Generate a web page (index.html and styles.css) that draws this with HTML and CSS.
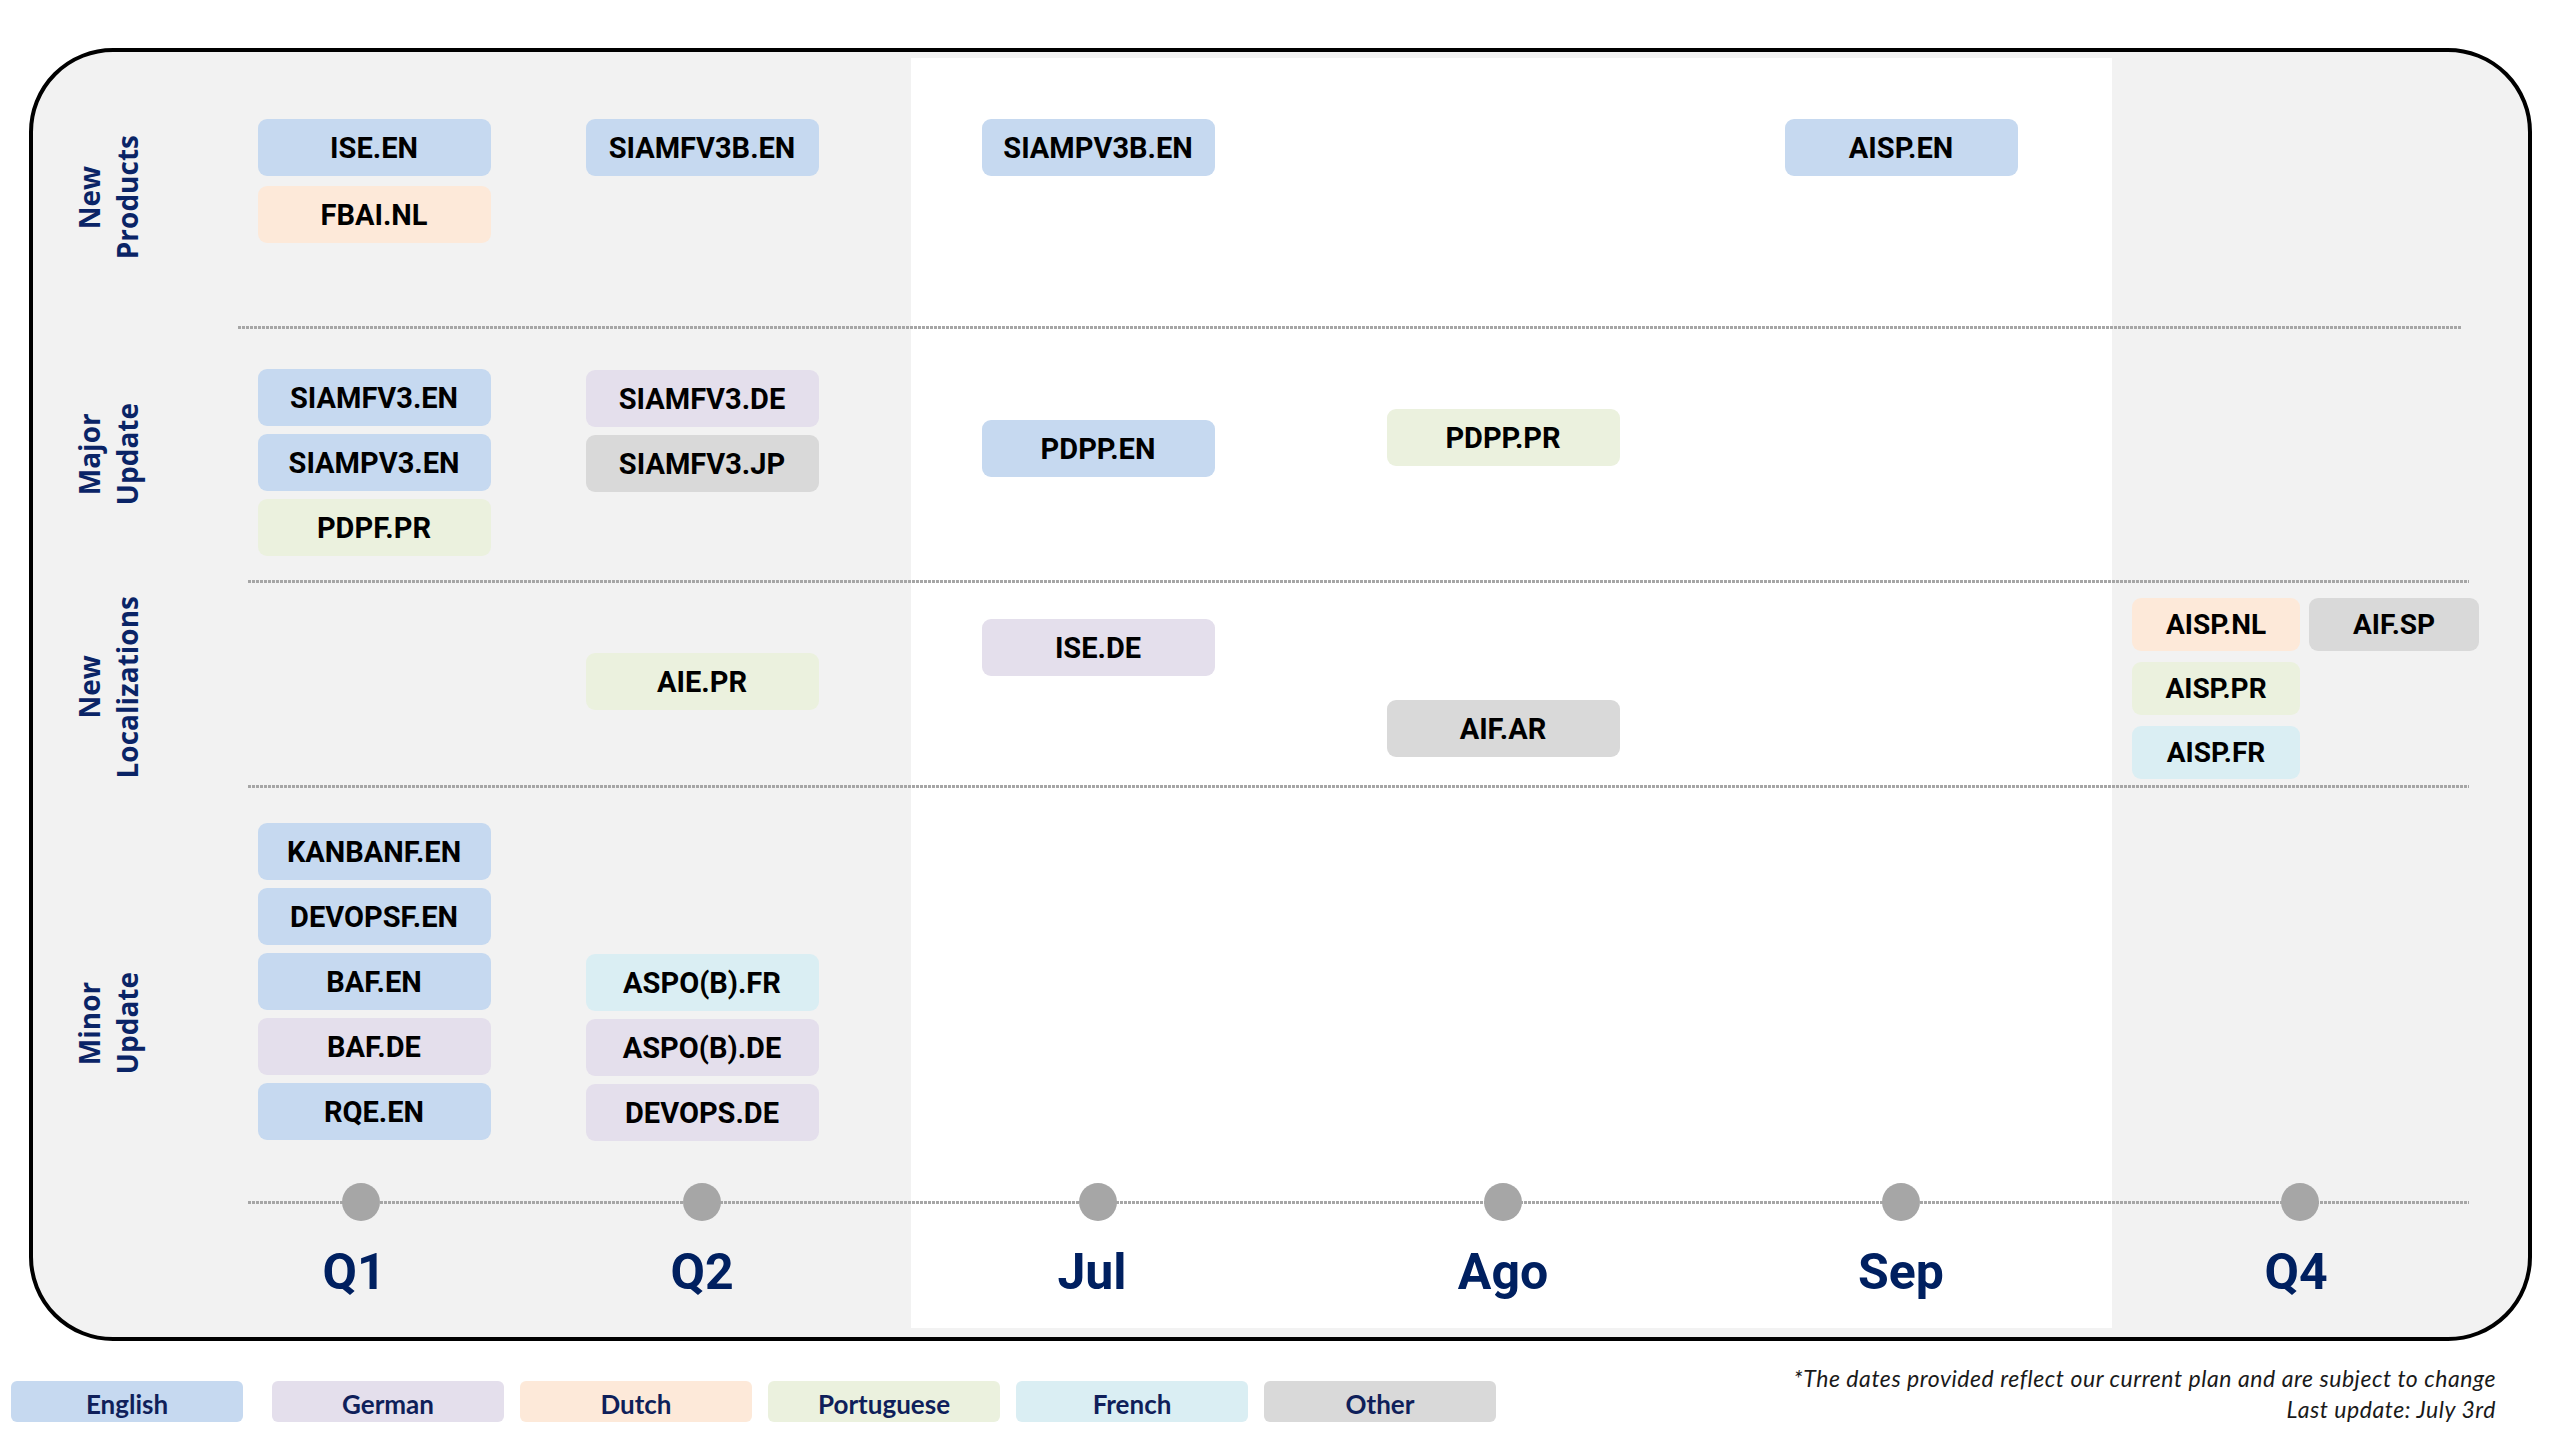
FILE: index.html
```html
<!DOCTYPE html>
<html lang="en">
<head>
<meta charset="utf-8">
<title>Roadmap</title>
<link rel="stylesheet" href="styles.css">
</head>
<body>
<div class="page">
  <div class="board">
    <div class="panel"></div>

    <div class="rule rule-1"></div>
    <div class="rule rule-2"></div>
    <div class="rule rule-3"></div>
    <div class="rule rule-time"></div>

    <div class="rowlabel r-np lbl-np"><span>New<br>Products</span></div>
    <div class="rowlabel r-mu"><span>Major<br>Update</span></div>
    <div class="rowlabel r-nl lbl-nl"><span>New<br>Localizations</span></div>
    <div class="rowlabel r-mi lbl-mi"><span>Minor<br>Update</span></div>

    <!-- New Products -->
    <div class="cell c-q1 r-np top-np wide-gap">
      <div class="tag en">ISE.EN</div>
      <div class="tag nl">FBAI.NL</div>
    </div>
    <div class="cell c-q2 r-np top-np">
      <div class="tag en">SIAMFV3B.EN</div>
    </div>
    <div class="cell c-jul r-np top-np">
      <div class="tag en">SIAMPV3B.EN</div>
    </div>
    <div class="cell c-sep r-np top-np">
      <div class="tag en">AISP.EN</div>
    </div>

    <!-- Major Update -->
    <div class="cell c-q1 r-mu mu-q1">
      <div class="tag en">SIAMFV3.EN</div>
      <div class="tag en">SIAMPV3.EN</div>
      <div class="tag pt">PDPF.PR</div>
    </div>
    <div class="cell c-q2 r-mu mu-q2">
      <div class="tag de">SIAMFV3.DE</div>
      <div class="tag ot">SIAMFV3.JP</div>
    </div>
    <div class="cell c-jul r-mu mu-jul">
      <div class="tag en">PDPP.EN</div>
    </div>
    <div class="cell c-ago r-mu mu-ago">
      <div class="tag pt">PDPP.PR</div>
    </div>

    <!-- New Localizations -->
    <div class="cell c-q2 r-nl nl-q2">
      <div class="tag pt">AIE.PR</div>
    </div>
    <div class="cell c-jul r-nl nl-jul">
      <div class="tag de">ISE.DE</div>
    </div>
    <div class="cell c-ago r-nl nl-ago">
      <div class="tag ot">AIF.AR</div>
    </div>
    <div class="q4grid c-q4 r-nl">
      <div class="tag small nl">AISP.NL</div>
      <div class="tag small ot">AIF.SP</div>
      <div class="tag small pt">AISP.PR</div>
      <div class="tag small fr q4-first">AISP.FR</div>
    </div>

    <!-- Minor Update -->
    <div class="cell c-q1 r-mi mi-q1">
      <div class="tag en">KANBANF.EN</div>
      <div class="tag en">DEVOPSF.EN</div>
      <div class="tag en">BAF.EN</div>
      <div class="tag de">BAF.DE</div>
      <div class="tag en">RQE.EN</div>
    </div>
    <div class="cell c-q2 r-mi mi-q2">
      <div class="tag fr">ASPO(B).FR</div>
      <div class="tag de">ASPO(B).DE</div>
      <div class="tag de">DEVOPS.DE</div>
    </div>

    <!-- Timeline -->
    <div class="node c-q1 node-q1"></div>
    <div class="node c-q2"></div>
    <div class="node c-jul"></div>
    <div class="node c-ago"></div>
    <div class="node c-sep"></div>
    <div class="node c-q4 node-q4"></div>

    <div class="period c-q1 period-q1">Q1</div>
    <div class="period c-q2">Q2</div>
    <div class="period c-jul period-jul">Jul</div>
    <div class="period c-ago">Ago</div>
    <div class="period c-sep">Sep</div>
    <div class="period c-q4 period-q4">Q4</div>
  </div>

  <div class="footer">
    <div class="legend">
      <div class="key en key-first">English</div>
      <div class="key de">German</div>
      <div class="key nl">Dutch</div>
      <div class="key pt">Portuguese</div>
      <div class="key fr">French</div>
      <div class="key ot">Other</div>
    </div>
    <div class="note">
      <p>*The dates provided reflect our current plan and are subject to change</p>
      <p>Last update: July 3rd</p>
    </div>
  </div>
</div>
</body>
</html>
```

FILE: styles.css
```css
* { box-sizing: border-box; }

html, body {
  margin: 0;
  padding: 0;
  background: #ffffff;
}

.page {
  width: 2560px;
  height: 1440px;
  padding-top: 48px;
  padding-left: 29px;
}

.board {
  width: 2503px;
  height: 1293px;
  border: 4px solid #000;
  border-radius: 84px;
  background: #f2f2f2;
  display: grid;
  grid-template-columns: 207px 268px 388px 15px 374px 436px 360px 31px 416px;
  grid-template-rows: 274px 3px 251px 3px 202px 3px 395px 38px 116px;
}

.panel {
  grid-column: 5 / 9;
  grid-row: 1 / -1;
  margin: 6px 0 9px;
  background: #ffffff;
}

/* dotted rules */
.rule {
  grid-column: 2 / -1;
  height: 3px;
  align-self: center;
  margin: 0 59px 0 8px;
  background: repeating-linear-gradient(90deg, #a6a6a6 0 3px, transparent 3px 4px);
}
.rule-1 { grid-row: 2; margin-left: -2px; margin-right: 67px; }
.rule-2 { grid-row: 4; }
.rule-3 { grid-row: 6; }
.rule-time { grid-row: 8; }

/* row labels */
.rowlabel {
  grid-column: 1;
  display: flex;
  align-items: center;
  justify-content: center;
  padding-right: 57px;
}
.rowlabel span {
  writing-mode: vertical-rl;
  transform: rotate(180deg);
  text-align: center;
  font-family: "Open Sans", "Noto Sans", sans-serif;
  font-weight: 700;
  font-size: 28px;
  line-height: 38px;
  color: #0a2466;
}
.lbl-np { padding-top: 16px; }
.lbl-nl { padding-top: 7px; }
.lbl-mi { padding-top: 75px; }

/* grid placement */
.r-np { grid-row: 1; }
.r-mu { grid-row: 3; }
.r-nl { grid-row: 5; }
.r-mi { grid-row: 7; }

.c-q1 { grid-column: 2; }
.c-q2 { grid-column: 3; }
.c-jul { grid-column: 5; }
.c-ago { grid-column: 6; }
.c-sep { grid-column: 7; }
.c-q4 { grid-column: 9; }

/* cells */
.cell {
  display: flex;
  flex-direction: column;
  align-items: center;
  gap: 8px;
}
.wide-gap { gap: 10px; }

.top-np { padding-top: 67px; }
.mu-q1 { padding-top: 40px; }
.mu-q2 { padding-top: 41px; }
.mu-jul { padding-top: 91px; }
.mu-ago { padding-top: 80px; }
.nl-q2 { padding-top: 70px; }
.nl-jul { padding-top: 36px; }
.nl-ago { padding-top: 117px; }
.mi-q1 { padding-top: 35px; }
.mi-q2 { padding-top: 166px; }

.q4grid {
  display: grid;
  grid-template-columns: 168px 170px;
  grid-auto-rows: 53px;
  column-gap: 9px;
  row-gap: 11px;
  align-content: start;
  padding-top: 15px;
  padding-left: 20px;
}
.q4-first { grid-column: 1; }

/* tags */
.tag {
  width: 233px;
  height: 57px;
  border-radius: 9px;
  display: flex;
  align-items: center;
  justify-content: center;
  font-family: Roboto, "Liberation Sans", sans-serif;
  font-weight: 700;
  font-size: 29px;
  color: #000000;
  white-space: nowrap;
}
.tag.small {
  width: auto;
  height: 53px;
  font-size: 28px;
}

.en { background: #c6d9f0; }
.de { background: #e4dfec; }
.nl { background: #fde9d9; }
.pt { background: #ebf1de; }
.fr { background: #daeef3; }
.ot { background: #d9d9d9; }

/* timeline */
.node {
  grid-row: 8;
  justify-self: center;
  width: 38px;
  height: 38px;
  border-radius: 50%;
  background: #a6a6a6;
}
.node-q1 { margin-right: 26px; }
.node-q4 { margin-right: 40px; }

.period {
  grid-row: 9;
  justify-self: center;
  padding-top: 26px;
  font-family: Roboto, "Liberation Sans", sans-serif;
  font-weight: 700;
  font-size: 50px;
  line-height: 1;
  color: #002060;
}
.period-q1 { margin-right: 40px; }
.period-jul { margin-right: 12px; }
.period-q4 { margin-right: 48px; }

/* footer */
.footer {
  display: flex;
  justify-content: space-between;
  align-items: flex-start;
  margin-top: 22px;
  margin-left: -18px;
  padding-right: 64px;
}

.legend {
  display: flex;
  gap: 16px;
  margin-top: 18px;
}
.key {
  width: 232px;
  height: 41px;
  border-radius: 6px;
  display: flex;
  align-items: center;
  justify-content: center;
  padding-top: 4px;
  font-family: Lato, "Open Sans", sans-serif;
  font-weight: 700;
  font-size: 26px;
  color: #0f1f5a;
}
.key-first { margin-right: 13px; }

.note {
  text-align: right;
  font-family: Lato, "Open Sans", sans-serif;
  font-style: italic;
  font-weight: 400;
  font-size: 23px;
  letter-spacing: 0.55px;
  line-height: 31px;
  color: #1a1a1a;
}
.note p { margin: 0; }
```
